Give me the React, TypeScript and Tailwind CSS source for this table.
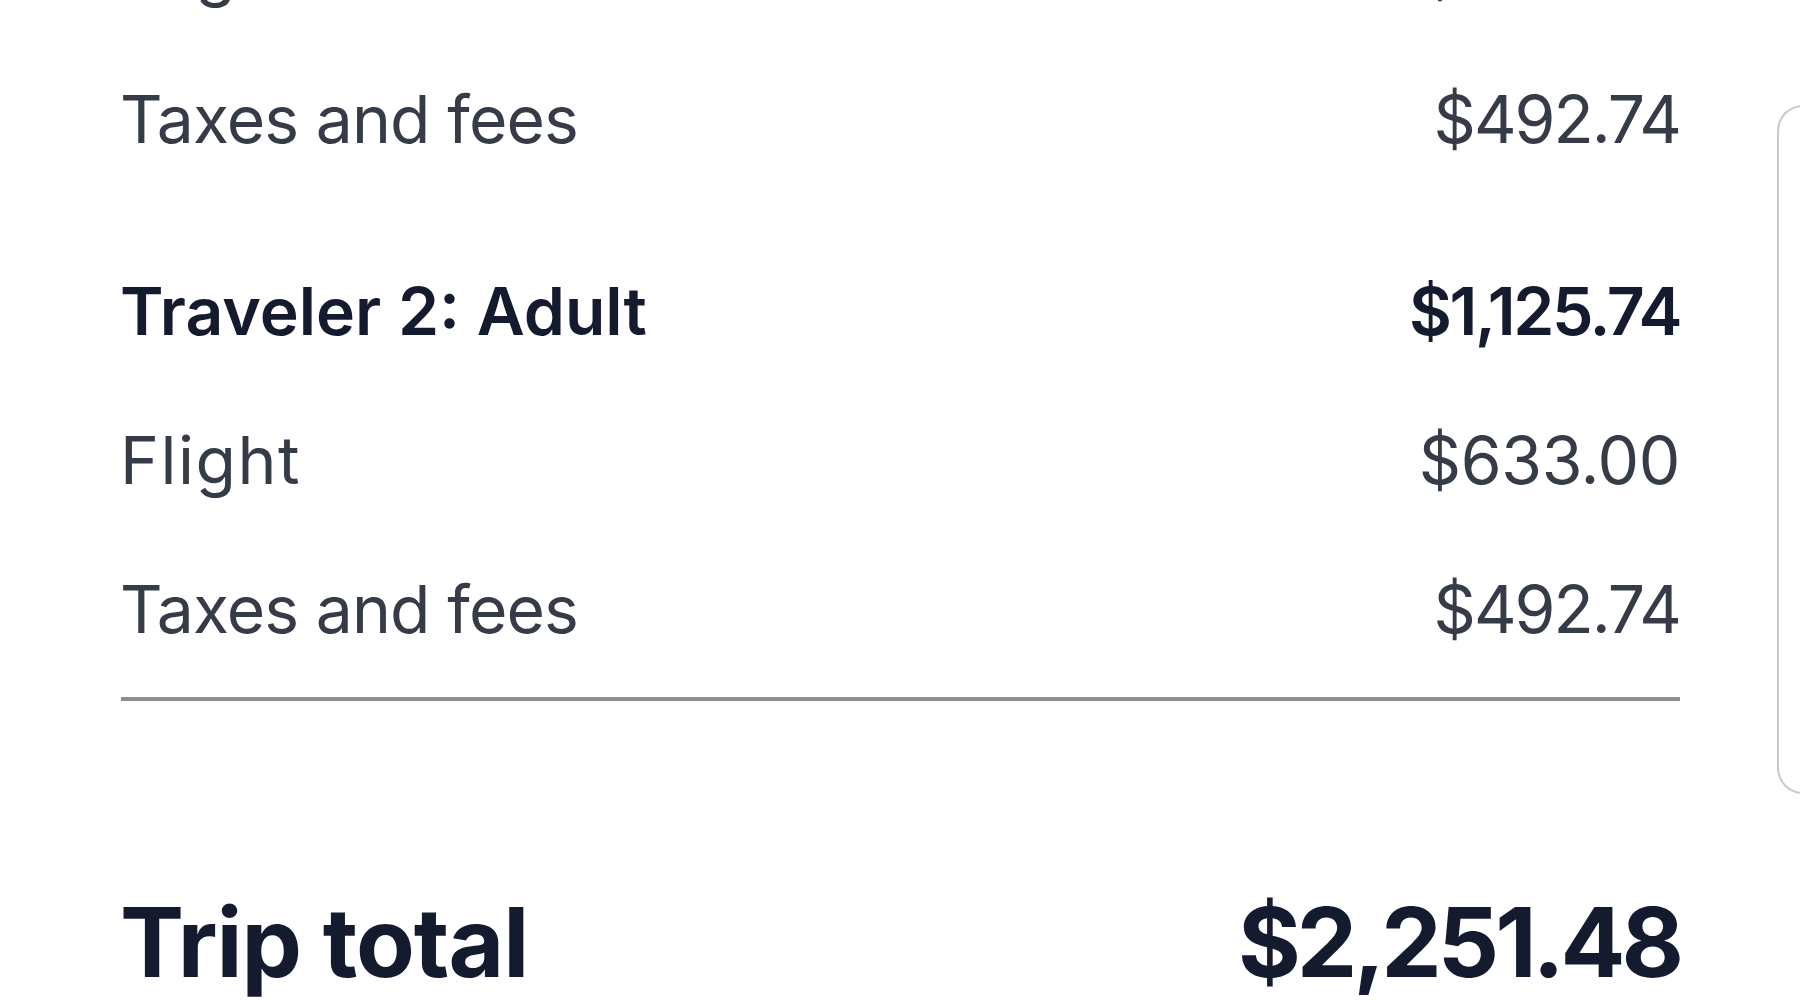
import React from 'react'

type Line = { label: string; amount: string; strong?: boolean; track?: string; amountTrack?: string }

const travelers: Line[][] = [
  [
    { label: 'Flight', amount: '$633.00', track: 'tracking-[1.5px]', amountTrack: 'tracking-[-0.4px]' },
    { label: 'Taxes and fees', amount: '$492.74' },
  ],
  [
    { label: 'Traveler 2: Adult', amount: '$1,125.74', strong: true, track: 'tracking-normal', amountTrack: 'tracking-[-2.4px]' },
    { label: 'Flight', amount: '$633.00', track: 'tracking-[1.5px]', amountTrack: 'tracking-[-0.4px]' },
    { label: 'Taxes and fees', amount: '$492.74' },
  ],
]

function Row({ label, amount, strong, track, amountTrack }: Line) {
  return (
    <div
      className={
        'flex h-[66px] items-start justify-between text-[66px] leading-none ' +
        (strong ? 'font-semibold text-[#151b2e]' : 'font-normal text-[#363b48]')
      }
    >
      <span className={track ?? 'tracking-[-0.9px]'}>{label}</span>
      <span className={amountTrack ?? 'tracking-[-2px]'}>{amount}</span>
    </div>
  )
}

export default function App() {
  return (
    <div
      className="flex h-[1000px] w-[1800px] overflow-hidden bg-white"
      style={{ fontFamily: 'Inter, "Noto Sans", sans-serif' }}
    >
      <div className="ml-[120px] mt-[-63px] flex w-[1560px] shrink-0 flex-col">
        <div className="flex flex-col gap-[126px]">
          {travelers.map((group, i) => (
            <div key={i} className="flex flex-col gap-[83px]">
              {group.map((line, j) => (
                <Row key={j} {...line} />
              ))}
            </div>
          ))}
        </div>

        <div className="ml-[1px] mt-[55px] h-[4px] bg-[#8e8e8e]" />

        <div className="mt-[193px] flex items-start justify-between text-[96px] font-bold leading-none text-[#151b2e]">
          <span className="tracking-[-1px]">Trip total</span>
          <span className="tracking-[-4px]">$2,251.48</span>
        </div>
      </div>

      <div className="ml-[97px] mt-[105px] h-[689px] w-[60px] shrink-0 rounded-l-[26px] border-2 border-r-0 border-[#c9c9c9]" />
    </div>
  )
}
